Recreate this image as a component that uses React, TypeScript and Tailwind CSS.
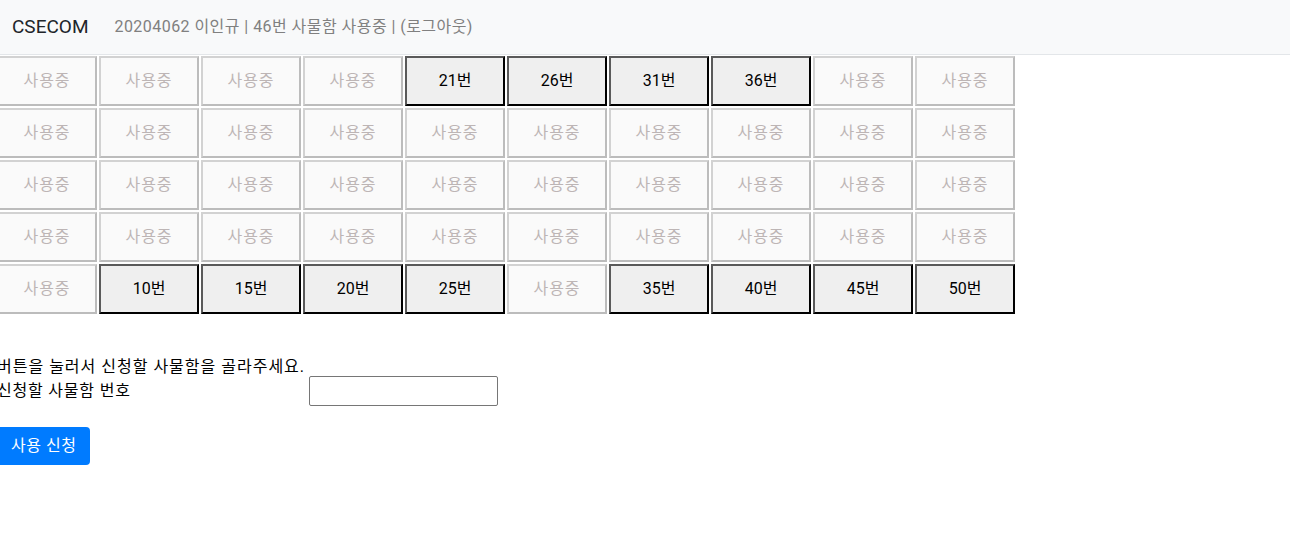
const available = new Set([21, 26, 31, 36, 10, 15, 20, 25, 35, 40, 45, 50]);

function Locker({ num }: { num: number }) {
  if (available.has(num)) {
    return (
      <button className="h-[50px] w-[100px] border-2 border-t-[#5a5a5a] border-l-[#5a5a5a] border-r-black border-b-black bg-[#efefef] text-[16px] text-black">
        {num}번
      </button>
    );
  }
  return (
    <button
      disabled
      className="h-[50px] w-[100px] border-2 border-t-[#d2d2d2] border-l-[#d2d2d2] border-r-[#bcbcbc] border-b-[#bcbcbc] bg-[#fafafa] text-[16px] tracking-[1px] text-[#bdb5b5]"
    >
      사용중
    </button>
  );
}

export default function App() {
  const rows = [0, 1, 2, 3, 4];
  const cols = [0, 1, 2, 3, 4, 5, 6, 7, 8, 9];

  return (
    <div className="min-h-screen bg-white font-['Segoe_UI',Roboto,'Noto_Sans_CJK_KR',sans-serif] text-[16px] text-[#212529]">
      <nav className="flex h-[55px] items-center border-b border-[#e3e6e9] bg-[#f8f9fa] pl-[12px]">
        <span className="mr-[26px] text-[19px] text-[#212529]">CSECOM</span>
        <span className="text-[16px] tracking-[0.45px] text-[#808080]">20204062 이인규 | 46번 사물함 사용중 | (로그아웃)</span>
      </nav>

      <main className="ml-[-3px]">
        <div className="mt-[1px] grid w-fit grid-cols-[repeat(10,100px)] gap-[2px]">
          {rows.map((r) =>
            cols.map((c) => <Locker key={`${r}-${c}`} num={c * 5 + r + 1} />)
          )}
        </div>

        <div className="mt-[44px] grid w-fit grid-cols-[312px_auto] grid-rows-[18px_30px] items-center">
          <div className="whitespace-nowrap leading-[18px] tracking-[1px] text-black">버튼을 눌러서 신청할 사물함을 골라주세요.</div>
          <div />
          <label className="whitespace-nowrap tracking-[0.8px] text-black">신청할 사물함 번호</label>
          <input className="h-[30px] w-[189px] rounded-[2px] border border-[#767676] bg-white px-1 outline-none" />
        </div>

        <button className="mt-[21px] h-[38px] rounded-[4px] bg-[#007bff] px-[14px] text-[16px] tracking-[0.5px] text-white">
          사용 신청
        </button>
      </main>
    </div>
  );
}
